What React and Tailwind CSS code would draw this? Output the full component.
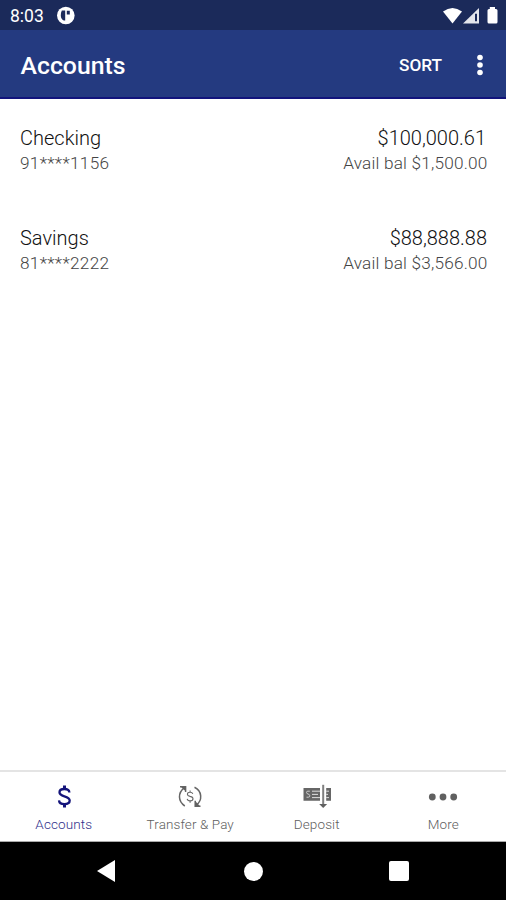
import React from "react";

const accounts = [
  { name: "Checking", number: "91****1156", balance: "$100,000.61", available: "Avail bal $1,500.00", end: "pr-[20px]" },
  { name: "Savings", number: "81****2222", balance: "$88,888.88", available: "Avail bal $3,566.00", end: "pr-[19px]" },
];

function StatusBar() {
  return (
    <div className="flex h-[30px] shrink-0 items-center bg-[#1b2a5a] text-white">
      <span className="ml-[10px] mt-[2px] w-[46px] text-[17.5px] leading-5">8:03</span>
      <svg className="mt-px h-[19px] w-[19px]" viewBox="0 0 19 19">
        <circle cx="9.8" cy="9.5" r="8.8" fill="#fff" />
        <path d="M5.8 4.6H9.2V14.5H7.8Q4.8 13 4.8 9.5Q4.8 6.8 5.8 4.6ZM10.8 4.8H13.8V8.6H10.8Z" fill="#1b2a5a" />
      </svg>
      <svg className="ml-auto mr-[7px] mt-[1px] h-[18px] w-[56px]" viewBox="0 0 56 18">
        <path d="M0 4.5Q9.5-2.5 19 4.5L9.5 16.5Z" fill="#fff" />
        <path d="M20 16.5L36 1V16.5Z" fill="#e4e6ec" />
        <path d="M32 6.8H34V14.2H32Z" fill="#1b2a5a" />
        <path d="M46.8 0H52V2H53Q54.5 2 54.5 3.5V15Q54.5 16.5 53 16.5H46Q44.5 16.5 44.5 15V3.5Q44.5 2 46 2H46.8Z" fill="#fff" />
      </svg>
    </div>
  );
}

function Header() {
  return (
    <header className="flex h-[69px] shrink-0 items-center border-b-2 border-[#12147c] bg-[#243a80] pl-[20.5px] text-white">
      <h1 className="mt-[4px] text-[24.8px] font-medium leading-8">Accounts</h1>
      <button className="ml-auto mr-[34px] mt-[2px] text-[17.2px] font-medium leading-5">SORT</button>
      <svg className="mr-[22px] mt-[2px] h-[22px] w-[8px]" viewBox="0 0 8 22" fill="#fff">
        <circle cx="4" cy="3.5" r="2.8" />
        <circle cx="4" cy="11" r="2.8" />
        <circle cx="4" cy="18.5" r="2.8" />
      </svg>
    </header>
  );
}

function DollarIcon() {
  return (
    <svg className="h-[26px] w-[30px]" viewBox="0 0 30 26" fill="none" stroke="#14147a">
      <path d="M20.4 9.5C20.2 7 18.2 6 15.4 6C12.5 6 10.5 7 10.5 9.3C10.5 11.6 12.5 12.5 15.4 13.3C18.7 14.2 20.7 15.2 20.7 17.6C20.7 20 18.5 21.2 15.4 21.2C12.2 21.2 10.2 19.8 10 17.4" strokeWidth="2.3" />
      <path d="M15.5 2.5V6M15.5 21V24.5" strokeWidth="3" />
    </svg>
  );
}

function TransferIcon() {
  return (
    <svg className="h-[26px] w-[30px]" viewBox="0 0 30 26" fill="none" stroke="#666" strokeWidth="1.5">
      <path d="M9.8 23C3 18.5 2.6 9.8 9.2 4.8M5 3.8H10.6V9M19.5 4.3C27.2 8 27.8 17.4 21 22.3M20.2 17.8V23.3H25.5" />
      <path d="M20.2 18V23.3H25ZM5.8 3.8H10.6V8.3Z" fill="#606060" stroke="none" />
      <path d="M17.8 10.9C17.4 9.7 16.5 9.3 15.1 9.3C13.5 9.3 12.4 10 12.4 11.2C12.4 12.6 13.6 13 15.1 13.4C16.9 13.8 18 14.4 18 15.8C18 17.2 16.8 17.9 15.1 17.9C13.5 17.9 12.4 17.2 12.2 15.9M15.1 7.4V9.3M15.1 17.9V19.8" strokeWidth="1.1" />
    </svg>
  );
}

function DepositIcon() {
  return (
    <svg className="h-[26px] w-[30px]" viewBox="0 0 30 26">
      <path d="M1.5 5H18V17.8H1.5ZM24.2 5H29V17.8H24.2Z" fill="#666" />
      <path d="M10 8.2H18M10 11.4H16M10 14.6H18M24.2 8.2H27M24.2 11.4H26M24.2 14.6H27" stroke="#ddd" strokeWidth="1" />
      <path d="M7.8 8.2H5.8Q4.5 8.2 4.5 9.4Q4.5 10.7 6 11Q7.8 11.4 7.8 12.8Q7.8 14.2 6.3 14.2H4.5" fill="none" stroke="#ccc" strokeWidth="1" />
      <path d="M21.2 1.8V21.5" stroke="#808080" strokeWidth="2" />
      <path d="M17.2 21H25.2L21.2 25Z" fill="#606060" />
    </svg>
  );
}

function MoreIcon() {
  return (
    <svg className="h-[26px] w-[30px]" viewBox="0 0 30 26" fill="#606060">
      <circle cx="4.3" cy="14" r="3.4" />
      <circle cx="15" cy="14" r="3.4" />
      <circle cx="25.7" cy="14" r="3.4" />
    </svg>
  );
}

const tabs = [
  { label: "Accounts", Icon: DollarIcon, color: "text-[#30308a]" },
  { label: "Transfer & Pay", Icon: TransferIcon, color: "text-[#606060]" },
  { label: "Deposit", Icon: DepositIcon, color: "text-[#606060]" },
  { label: "More", Icon: MoreIcon, color: "text-[#606060]" },
];

export default function App() {
  return (
    <div className="flex h-[900px] w-[506px] flex-col overflow-hidden bg-white font-['Roboto',sans-serif]">
      <StatusBar />
      <Header />
      <main className="flex-1 pt-[27px]">
        {accounts.map((a) => (
          <section key={a.name} className="flex h-[100px] justify-between pl-[20px] font-light">
            <div>
              <div className="text-[20px] leading-[25px] text-[#111]">{a.name}</div>
              <div className="text-[17.2px] leading-[25px] tracking-[0.3px] text-[#444]">{a.number}</div>
            </div>
            <div className="text-right">
              <div className={`text-[20px] leading-[25px] text-[#111] ${a.end}`}>{a.balance}</div>
              <div className="pr-[18.5px] text-[17.2px] leading-[25px] tracking-[0.2px] text-[#444]">{a.available}</div>
            </div>
          </section>
        ))}
      </main>
      <nav className="grid h-[72px] shrink-0 grid-cols-4 border-b border-t-2 border-b-[#aaa] border-t-[#e4e4e4] bg-white">
        {tabs.map(({ label, Icon, color }) => (
          <div key={label} className={`flex flex-col items-center pl-px pt-[11px] ${color}`}>
            <Icon />
            <span className="mt-[6px] whitespace-nowrap text-[13.5px] font-light leading-[18px] tracking-[0.1px]">{label}</span>
          </div>
        ))}
      </nav>
      <footer className="flex h-[58px] shrink-0 items-center bg-black">
        <svg className="ml-[97px] h-[22px] w-[18px]" viewBox="0 0 18 22"><path d="M0 11L18 0V22Z" fill="#fff" /></svg>
        <div className="ml-[129px] h-[19px] w-[19px] rounded-full bg-white" />
        <div className="ml-[126px] h-[20px] w-[20px] rounded-[2px] bg-white" />
      </footer>
    </div>
  );
}
